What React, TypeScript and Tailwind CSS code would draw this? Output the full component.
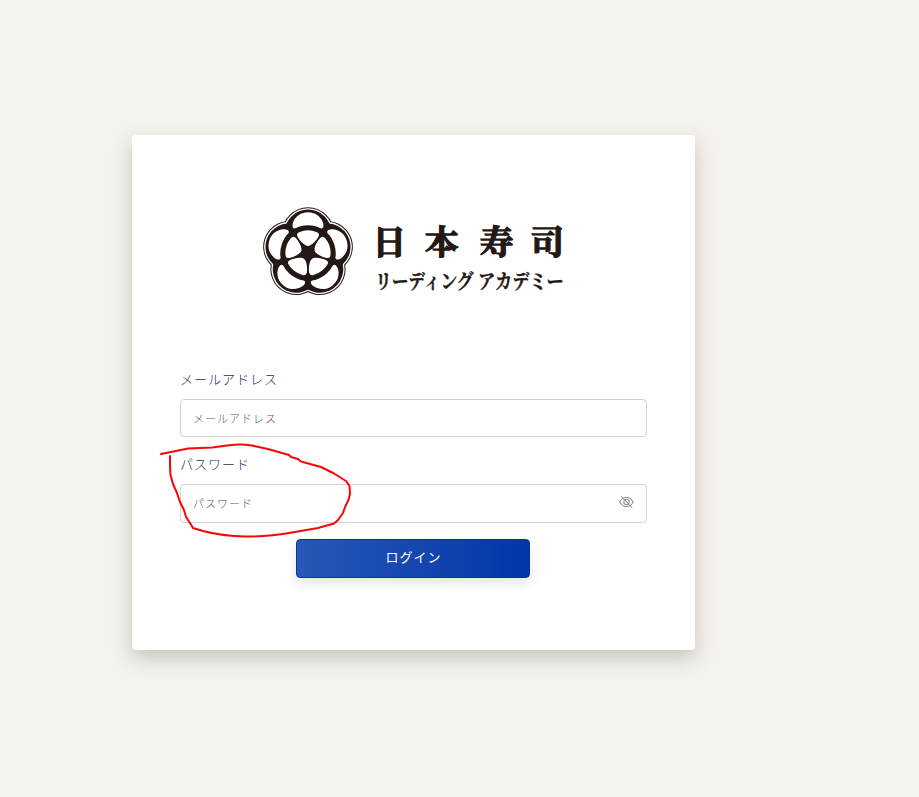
import React from "react";

const petals = [0, 72, 144, 216, 288];
const kanji = [
  { c: "日", x: 372.5 },
  { c: "本", x: 425 },
  { c: "寿", x: 480 },
  { c: "司", x: 530.5 },
];

function Logo() {
  return (
    <svg width="304" height="94" viewBox="262 205 304 94" className="block" fill="#231815">
      <g transform="translate(308 253) scale(.33333)">
        {petals.map((a) => <circle key={a} cy="-60" r="77.5" fill="#231815" transform={`rotate(${a})`} />)}
        {petals.map((a) => <circle key={a} cy="-60" r="74.500" fill="#fff" transform={`rotate(${a})`} />)}
        {petals.map((a) => <circle key={a} cy="-60" r="70.500" fill="#231815" transform={`rotate(${a})`} />)}
        {petals.map((a) => (
          <path key={a} fill="#fff" transform={`rotate(${a})`} d="M-38-74C-46-72-48-81-45-91C-38-111-20-122 0-122C20-122 38-111 45-91C48-81 46-72 38-74C27-80 14-83 0-83C-14-83-27-80-38-74Z" />
        ))}
        {petals.map((a) => (
          <path key={a} fill="#fff" transform={`rotate(${a})`} d="M-32-50Q-36-59-25-63Q0-73 25-63Q36-59 32-50C25-36 10-21 0-21C-10-21-25-36-32-50Z" />
        ))}
      </g>
      <g fontFamily="'Noto Serif CJK JP','Noto Sans CJK JP',serif" fontWeight="700" stroke="#231815">
        {kanji.map((k) => (
          <text key={k.c} x={k.x} y="253.500" fontSize="33.500" strokeWidth="1.3">{k.c}</text>
        ))}
        <text transform="translate(375 289) scale(.835 1)" fontSize="20" strokeWidth=".4">リーディング</text>
        <text transform="translate(478 289) scale(.86 1)" fontSize="20" strokeWidth=".4">アカデミー</text>
      </g>
    </svg>
  );
}

function EyeOff() {
  return (
    <svg width="15" height="14" viewBox="0 0 15 14" fill="none" stroke="#6b7280" strokeWidth=".9" className="block">
      <path d="M.8 7C2.2 4 4.6 2.400 7.500 2.400S12.800 4 14.200 7C12.800 10 10.400 11.600 7.500 11.600S2.200 10 .8 7Z" />
      <circle cx="7.5" cy="7" r="2.8" />
      <path d="M2 1.200L13.200 12.800" />
    </svg>
  );
}

export default function App() {
  return (
    <div className="relative h-[797px] w-[919px] overflow-hidden bg-[#f6f3ee] pt-[135px] pl-[132px] font-['Noto_Sans_CJK_JP',sans-serif]">
      <main className="flex h-[515px] w-[563px] flex-col rounded-[4px] bg-white px-12 pt-[70px] shadow-[0_8px_20px_rgba(60,50,45,0.25)]">
        <div className="ml-[82px] h-[94px]">
          <Logo />
        </div>
        <label htmlFor="email" className="mt-[69px] h-[31px] text-[13px] leading-[22px] font-light tracking-[1px] text-[#20304f]">メールアドレス</label>
        <input id="email" placeholder="メールアドレス" className="h-[38px] w-full rounded-[4px] border border-[#ced4da] px-3 pb-px text-[11px] font-light tracking-[1px] outline-none placeholder:text-[#4f5967]" />
        <label htmlFor="password" className="mt-4 h-[31px] text-[13px] leading-[22px] font-light tracking-[1px] text-[#20304f]">パスワード</label>
        <div className="flex h-[39px] items-center rounded-[4px] border border-[#ced4da] pr-3">
          <input id="password" type="password" placeholder="パスワード" className="h-full min-w-0 flex-1 px-3 pb-[2px] text-[11px] font-light tracking-[1px] outline-none placeholder:text-[#4f5967]" />
          <button type="button" aria-label="パスワードを表示" className="-mt-[3px]"><EyeOff /></button>
        </div>
        <button type="button" className="mt-4 ml-[116px] h-[39px] w-[234px] rounded-[4px] border border-[#0036a3] bg-linear-to-r from-[#2857b8] to-[#0036a6] pb-[3px] pl-px text-[13px] tracking-[1px] text-white shadow-[0_6px_12px_rgba(0,0,0,0.10)]">ログイン</button>
      </main>
      <svg className="pointer-events-none absolute top-0 left-0" width="919" height="797" fill="none" stroke="#f90606" strokeWidth="2" strokeLinecap="round" strokeLinejoin="round">
        <path d="M161 454L188 448.500L212 447.500L229 445.200Q241 443.800 252 445.500L268 449L289 455L291 457L298 459L301 461.500L321 467L334 473.500L346 481L349.500 486L350 494L348.500 500L345 507L343 513L338 520L334 523.500L318 528L289 533Q270 536.500 245 536.500Q222 536 203 531L193 528L190 523L186 517L184 510L180 502L177 493L173 484L170.500 475L170 466L170 456" />
      </svg>
    </div>
  );
}
